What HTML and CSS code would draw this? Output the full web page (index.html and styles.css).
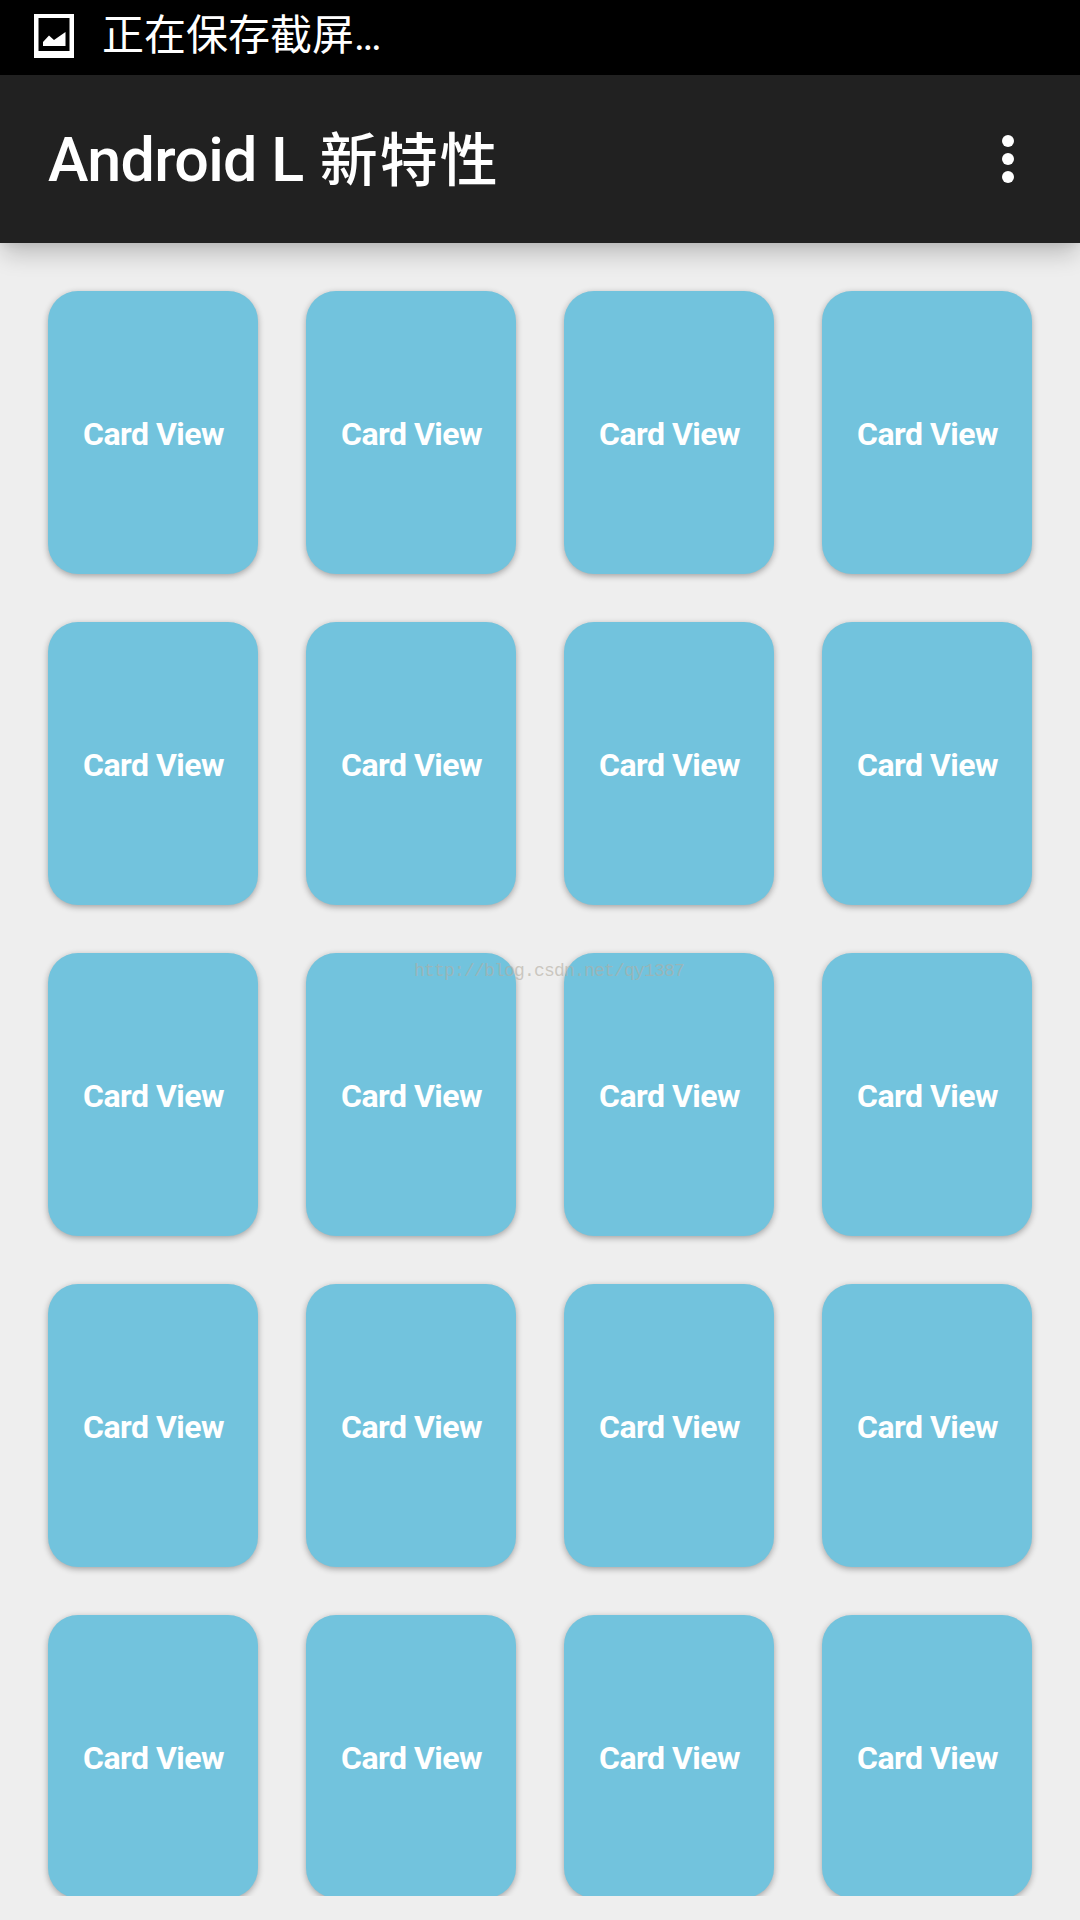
FILE: index.html
```html
<!DOCTYPE html>
<html lang="zh-CN"><head><meta charset="utf-8"><title>Android L 新特性</title><link rel="stylesheet" href="styles.css"></head>
<body>
<div class="status"><svg class="picture" viewBox="0 0 40 44"><path fill="#fff" fill-rule="evenodd" d="M0 0H40V44H0ZM4.5 4V37H35.5V4Z"/><path fill="#fff" d="M9 32V28L15 21.5L20 26L31.5 18V32Z"/></svg><span class="status-text">正在保存截屏<span class="dots">...</span></span></div>
<header class="bar"><h1 class="title">Android L <span class="title-cjk">新特性</span></h1><svg class="more" viewBox="0 0 14 50"><circle cx="7" cy="7" r="6"/><circle cx="7" cy="25" r="6"/><circle cx="7" cy="43" r="6"/></svg></header>
<main class="grid">
<div class="card">Card View</div><div class="card">Card View</div><div class="card">Card View</div><div class="card">Card View</div>
<div class="card">Card View</div><div class="card">Card View</div><div class="card">Card View</div><div class="card">Card View</div>
<div class="card">Card View</div><div class="card">Card View</div><div class="card">Card View</div><div class="card">Card View</div>
<div class="card">Card View</div><div class="card">Card View</div><div class="card">Card View</div><div class="card">Card View</div>
<div class="card">Card View</div><div class="card">Card View</div><div class="card">Card View</div><div class="card">Card View</div>
</main>
<div class="watermark">http://blog.csdn.net/qy1387</div>
</body></html>
```
FILE: styles.css
```css
* { box-sizing: border-box; }
body { margin: 0; width: 1080px; height: 1920px; overflow: hidden; position: relative; background: #eee; font-family: Roboto, "Noto Sans CJK SC", sans-serif; color: #fff; }
.status { height: 75px; background: #000; display: flex; align-items: center; padding: 0 34px 3px; gap: 28px; }
.picture { width: 40px; height: 44px; }
.status-text { font-size: 42px; line-height: 60px; }
.dots { letter-spacing: -2.6px; }
.bar { height: 168px; background: #212121; display: flex; align-items: center; justify-content: space-between; padding: 0 65px 0 48px; box-shadow: 0 14px 22px -3px rgba(0,0,0,.2), 0 1px 10px rgba(0,0,0,.08); }
.title { margin: 0; padding-top: 3px; font-size: 61px; font-weight: 500; line-height: 80px; letter-spacing: -.7px; }
.title-cjk { margin-left: 2px; font-size: 58px; letter-spacing: 2px; }
.more { width: 14px; height: 50px; fill: #fff; }
.grid { height: 1653px; overflow: hidden; padding: 48px; display: grid; grid-template-columns: repeat(4, 210px); grid-auto-rows: 283px; gap: 48px; }
.card { background: #72c3dd; border-radius: 30px; display: flex; align-items: center; justify-content: center; padding: 2px 0 0 1px; font-size: 32px; font-weight: 700; letter-spacing: -.5px; box-shadow: 0 2px 6px rgba(0,0,0,.32); }
.watermark { position: absolute; left: 414px; top: 961px; font: 18px "Liberation Mono", monospace; letter-spacing: -.8px; color: rgba(178,172,160,.6); }
```
